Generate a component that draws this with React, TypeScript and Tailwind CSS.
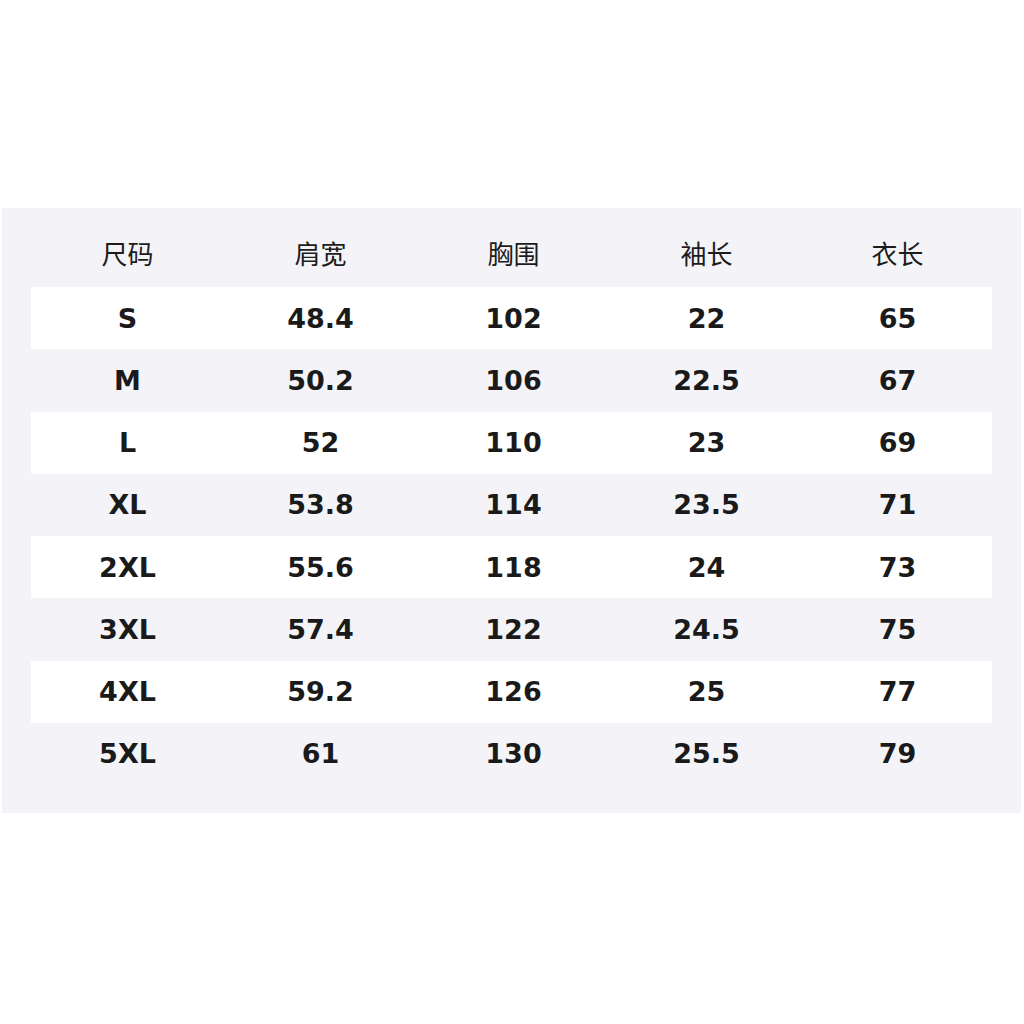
const headers = ["尺码", "肩宽", "胸围", "袖长", "衣长"];

const rows: string[][] = [
  ["S", "48.4", "102", "22", "65"],
  ["M", "50.2", "106", "22.5", "67"],
  ["L", "52", "110", "23", "69"],
  ["XL", "53.8", "114", "23.5", "71"],
  ["2XL", "55.6", "118", "24", "73"],
  ["3XL", "57.4", "122", "24.5", "75"],
  ["4XL", "59.2", "126", "25", "77"],
  ["5XL", "61", "130", "25.5", "79"],
];

export default function App() {
  return (
    <div className="w-[1024px] h-[1024px] bg-white pt-[208px]">
      <div className="ml-[2px] w-[1019px] bg-[#f4f4f8] px-[29px] pt-[17px] pb-[28px]">
        <div className="grid grid-cols-[193px_193px_193px_193px_1fr] h-[62px] pb-[6px] items-center font-['Noto_Sans_CJK_SC',sans-serif] text-[26px] text-[#1c1c1c]">
          {headers.map((h) => (
            <div key={h} className="text-center leading-none">
              {h}
            </div>
          ))}
        </div>
        {rows.map((r, i) => (
          <div
            key={r[0]}
            className={`grid grid-cols-[193px_193px_193px_193px_1fr] h-[62.25px] items-center font-['DejaVu_Sans',sans-serif] font-bold text-[27px] text-[#1a1a1a] ${
              i % 2 === 0 ? "bg-white" : ""
            }`}
          >
            {r.map((c, j) => (
              <div key={j} className="text-center leading-none">
                {c}
              </div>
            ))}
          </div>
        ))}
      </div>
    </div>
  );
}
